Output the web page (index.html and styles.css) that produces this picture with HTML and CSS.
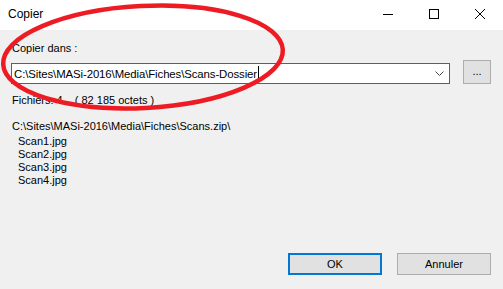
FILE: index.html
```html
<!DOCTYPE html>
<html lang="fr">
<head>
  <meta charset="UTF-8">
  <title>Copier</title>
  <link rel="stylesheet" href="styles.css">
</head>
<body>
  <div class="window">
    <div class="titlebar">
      <span class="title">Copier</span>
      <div class="controls">
        <span class="ctl">
          <svg width="10" height="10" viewBox="0 0 10 10"><path d="M0 5.5H10" stroke="#000" stroke-width="1"/></svg>
        </span>
        <span class="ctl">
          <svg width="10" height="10" viewBox="0 0 10 10"><rect x="0.5" y="0.5" width="9" height="9" fill="none" stroke="#000" stroke-width="1"/></svg>
        </span>
        <span class="ctl">
          <svg width="10" height="10" viewBox="0 0 10 10"><path d="M0 0L10 10M10 0L0 10" stroke="#000" stroke-width="1"/></svg>
        </span>
      </div>
    </div>

    <div class="content">
      <div class="label">Copier dans :</div>
      <div class="dest-row">
        <div class="combo">
          <span class="combo-text">C:\Sites\MASi-2016\Media\Fiches\Scans-Dossier</span><span class="caret"></span>
          <svg class="chevron" width="9" height="5" viewBox="0 0 9 5"><path d="M0.5 0.5L4.5 4.5L8.5 0.5" fill="none" stroke="#444" stroke-width="1"/></svg>
        </div>
        <button class="btn browse">...</button>
      </div>

      <div class="info">
        <span>Fichiers: 4</span>
        <span class="size">( 82 185 octets )</span>
      </div>

      <div class="listing">
        <div class="path">C:\Sites\MASi-2016\Media\Fiches\Scans.zip\</div>
        <ul class="files">
          <li>Scan1.jpg</li>
          <li>Scan2.jpg</li>
          <li>Scan3.jpg</li>
          <li>Scan4.jpg</li>
        </ul>
      </div>

      <div class="actions">
        <button class="btn ok">OK</button>
        <button class="btn">Annuler</button>
      </div>
    </div>

    <svg class="mark" width="503" height="289" viewBox="0 0 503 289">
      <ellipse cx="143" cy="57" rx="140" ry="51" transform="rotate(-3 143 57)" fill="none" stroke="#ed1c24" stroke-width="4.5"/>
    </svg>
  </div>
</body>
</html>
```

FILE: styles.css
```css
body {
  margin: 0;
  font-family: "Liberation Sans", Arial, sans-serif;
  font-size: 11px;
  color: #000;
  background: #f0f0f0;
}

.window {
  position: relative;
  width: 503px;
  height: 289px;
  overflow: hidden;
  display: flex;
  flex-direction: column;
}

.titlebar {
  height: 30px;
  background: #fff;
  display: flex;
  align-items: center;
  justify-content: space-between;
}

.title {
  font-size: 12px;
  padding-left: 8px;
  padding-bottom: 2px;
}

.controls {
  display: flex;
  height: 100%;
}

.ctl {
  width: 46px;
  display: flex;
  align-items: center;
  justify-content: center;
  padding-bottom: 2px;
}

.content {
  flex: 1;
  display: flex;
  flex-direction: column;
  padding: 12px 12px 14px 11px;
  background: #f0f0f0;
}

.label {
  line-height: 13px;
  padding-left: 1px;
  margin-bottom: 5px;
}

.dest-row {
  display: flex;
  align-items: flex-end;
  gap: 13px;
}

.combo {
  width: 439px;
  height: 21px;
  box-sizing: border-box;
  border: 1px solid #0078d7;
  background: #fff;
  display: flex;
  align-items: center;
  padding-left: 2px;
  position: relative;
}

.combo-text {
  font-size: 11.4px;
  letter-spacing: -0.1px;
}

.caret {
  display: inline-block;
  width: 1px;
  height: 15px;
  background: #000;
  margin-left: 1px;
}

.chevron {
  margin-left: auto;
  margin-right: 5px;
}

.btn {
  font-family: "Liberation Sans", Arial, sans-serif;
  font-size: 11px;
  color: #000;
  background: #e1e1e1;
  border: 1px solid #adadad;
  padding: 0;
  box-sizing: border-box;
  height: 22px;
  width: 94px;
}

.browse {
  width: 28px;
  height: 24px;
  padding-bottom: 3px;
}

.info {
  margin-top: 10px;
  padding-left: 1px;
  line-height: 13px;
  display: flex;
}

.size {
  margin-left: 12px;
}

.listing {
  margin-top: 13px;
  padding-left: 1px;
  line-height: 13px;
}

.files {
  list-style: none;
  margin: 2px 0 0;
  padding: 0 0 0 6px;
}

.actions {
  margin-top: auto;
  display: flex;
  justify-content: flex-end;
  gap: 15px;
}

.ok {
  border: 2px solid #0078d7;
}

.mark {
  position: absolute;
  top: 0;
  left: 0;
  pointer-events: none;
}
```
